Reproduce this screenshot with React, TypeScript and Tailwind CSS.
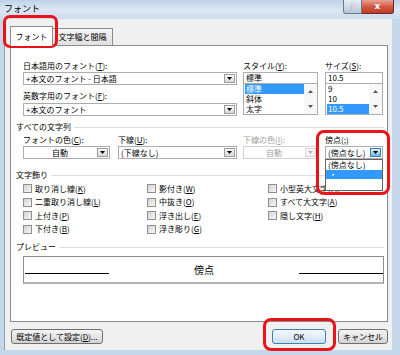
import React from "react";

const jp = "font-['Noto_Sans_CJK_JP',sans-serif]";

function Tri({ up, color = "#000" }: { up?: boolean; color?: string }) {
  return (
    <svg width="5" height="3" viewBox="0 0 5 3">
      <path d={up ? "M0 3h5L2.5 0z" : "M0 0h5L2.5 3z"} fill={color} />
    </svg>
  );
}

function DropBtn({ disabled, active }: { disabled?: boolean; active?: boolean }) {
  const look = active
    ? "border-[#3c7fb1] bg-gradient-to-b from-[#d9effa] to-[#6fb6de]"
    : disabled
    ? "border-[#d5d5d5] bg-[#f4f4f4]"
    : "border-[#9c9c9c] bg-gradient-to-b from-[#f8f8f8] to-[#d9d9d9]";
  return (
    <div className={`m-[1px] flex w-[11px] items-center justify-center border ${look}`}>
      <Tri color={disabled ? "#b4b4b4" : "#000"} />
    </div>
  );
}

function Combo({
  text,
  center,
  disabled,
  active,
  className = "",
}: {
  text: string;
  center?: boolean;
  disabled?: boolean;
  active?: boolean;
  className?: string;
}) {
  return (
    <div
      className={`flex h-[13px] items-stretch border bg-white ${
        disabled ? "border-[#d0d4da]" : "border-[#abadb3]"
      } ${className}`}
    >
      <div
        className={`flex flex-1 items-center whitespace-nowrap text-[8px] leading-none ${
          center ? "justify-center" : "pl-[2px]"
        } ${disabled ? "text-[#a0a0a0]" : "text-black"}`}
      >
        {text}
      </div>
      <DropBtn disabled={disabled} active={active} />
    </div>
  );
}

function ListBox({ items, selected }: { items: string[]; selected: number }) {
  return (
    <div className="flex h-[31px] border border-[#abadb3] border-t-0 bg-white">
      <div className="flex flex-1 flex-col pl-[1px]">
        {items.map((it, i) => (
          <div
            key={it}
            className={`flex h-[10px] items-center pl-[1px] text-[8px] leading-none ${
              i === selected ? "bg-[#3399ff] text-white" : "text-black"
            }`}
          >
            {it}
          </div>
        ))}
      </div>
      <div className="flex w-[13px] flex-col bg-[#f7f7f7]">
        <div className="flex flex-1 items-center justify-center">
          <Tri up color="#555" />
        </div>
        <div className="flex flex-1 items-center justify-center">
          <Tri color="#555" />
        </div>
      </div>
    </div>
  );
}

function Heading({ children }: { children: React.ReactNode }) {
  return (
    <div className="flex h-[12px] items-center">
      <span className="whitespace-nowrap text-[8px] leading-none">{children}</span>
      <div className="ml-[3px] h-px flex-1 bg-[#d5dfe5]" />
    </div>
  );
}

function Check({ children }: { children: React.ReactNode }) {
  return (
    <div className="flex items-center">
      <div className="mr-[3px] h-[9px] w-[9px] border border-[#8f8f8f] bg-gradient-to-br from-[#d4d4d4] to-[#f7f7f7]" />
      <span className="whitespace-nowrap text-[8px] leading-none">{children}</span>
    </div>
  );
}

export default function App() {
  return (
    <div className={`relative flex h-[355px] w-[400px] flex-col overflow-hidden bg-[#c4d7eb] text-black ${jp}`}>
      {/* title bar */}
      <div className="flex h-[19px] justify-between bg-gradient-to-b from-[#bed2e7] via-[#dbe7f3] to-[#cddcec] pl-[4px] pr-[6px]">
        <span className="pt-[2px] text-[9px] leading-[14px] text-black">フォント</span>
        <div className="flex h-[14px]">
          <div className="flex w-[19px] items-center justify-center rounded-bl-[3px] border border-t-0 border-[#6b7a8c] bg-gradient-to-b from-[#e6eef6] to-[#b7c8da] text-[9px] font-bold leading-none text-white [text-shadow:0_0_1px_#334]">
            ?
          </div>
          <div className="flex w-[32px] items-center justify-center rounded-br-[3px] border border-l-0 border-t-0 border-[#6e2a22] bg-gradient-to-b from-[#e8a293] via-[#d25a44] to-[#c13a22] font-['DejaVu_Sans',sans-serif] text-[9px] font-bold leading-none text-white">
            x
          </div>
        </div>
      </div>

      {/* client */}
      <div className="mb-[5px] ml-[4px] mr-[8px] flex flex-1 flex-col border-l border-[#8b9bb0] bg-[#f0f0f0] pl-[5px] pr-[4px]">
        {/* tabs */}
        <div className="flex h-[26px] items-end pt-[7px]">
          <div className="relative z-10 -mb-px flex h-[20px] w-[43px] items-center justify-center border border-b-0 border-[#898c95] bg-white text-[8px] leading-none">
            フォント
          </div>
          <div className="flex h-[17px] w-[60px] items-center justify-center border border-b-0 border-l-0 border-[#898c95] bg-gradient-to-b from-[#f5f5f5] to-[#e0e0e0] text-[8px] leading-none">
            文字幅と間隔
          </div>
        </div>

        {/* panel */}
        <div className="flex h-[277px] flex-col border border-[#898c95] bg-white pl-[5px] pr-[3px] pt-[13px]">
          <div className="flex pl-[7px]">
            <div className="flex w-[214px] flex-col">
              <div className="flex h-[13px] items-center text-[8px] leading-none">
                日本語用のフォント(<u>T</u>):
              </div>
              <Combo text="+本文のフォント - 日本語" />
              <div className="flex h-[18px] items-center pt-[4px] text-[8px] leading-none">
                英数字用のフォント(<u>F</u>):
              </div>
              <Combo text="+本文のフォント" />
            </div>
            <div className="ml-[6px] flex w-[75px] flex-col">
              <div className="flex h-[13px] items-center text-[8px] leading-none">
                スタイル(<u>Y</u>):
              </div>
              <div className="flex h-[12px] items-center border border-[#abadb3] pl-[2px] text-[8px] leading-none">
                標準
              </div>
              <ListBox items={["標準", "斜体", "太字"]} selected={0} />
            </div>
            <div className="ml-[7px] flex w-[58px] flex-col">
              <div className="flex h-[13px] items-center text-[8px] leading-none">
                サイズ(<u>S</u>):
              </div>
              <div className="flex h-[12px] items-center border border-[#abadb3] pl-[2px] text-[8px] leading-none">
                10.5
              </div>
              <ListBox items={["9", "10", "10.5"]} selected={2} />
            </div>
          </div>

          <div className="mt-[5px]">
            <Heading>すべての文字列</Heading>
          </div>
          <div className="flex pl-[7px]">
            <div className="flex w-[95px] flex-col">
              <div className="flex h-[13px] items-center text-[8px] leading-none">
                フォントの色(<u>C</u>):
              </div>
              <Combo text="自動" center className="w-[87px]" />
            </div>
            <div className="flex w-[125px] flex-col">
              <div className="flex h-[13px] items-center text-[8px] leading-none">
                下線(<u>U</u>):
              </div>
              <Combo text="(下線なし)" className="w-[119px]" />
            </div>
            <div className="flex w-[82px] flex-col">
              <div className="flex h-[13px] items-center text-[8px] leading-none text-[#a0a0a0]">
                下線の色(<u>I</u>):
              </div>
              <Combo text="自動" center disabled className="w-[75px]" />
            </div>
            <div className="flex w-[58px] flex-col">
              <div className="flex h-[13px] items-center text-[8px] leading-none">
                傍点(<u>;</u>)
              </div>
              <Combo text="(傍点なし)" active className="w-[58px]" />
            </div>
          </div>

          <div className="mt-[10px]">
            <Heading>文字飾り</Heading>
          </div>
          <div className="mt-[1px] grid grid-cols-[124px_121px_1fr] grid-rows-[13px_14px_13px_14px] pl-[7px]">
            <Check>取り消し線(<u>K</u>)</Check>
            <Check>影付き(<u>W</u>)</Check>
            <Check>小型英大文字(<u>M</u>)</Check>
            <Check>二重取り消し線(<u>L</u>)</Check>
            <Check>中抜き(<u>O</u>)</Check>
            <Check>すべて大文字(<u>A</u>)</Check>
            <Check>上付き(<u>P</u>)</Check>
            <Check>浮き出し(<u>E</u>)</Check>
            <Check>隠し文字(<u>H</u>)</Check>
            <Check>下付き(<u>B</u>)</Check>
            <Check>浮き彫り(<u>G</u>)</Check>
            <div />
          </div>

          <div className="mt-[5px]">
            <Heading>プレビュー</Heading>
          </div>
          <div className="ml-[7px] mt-[3px] flex h-[28px] items-center justify-between border border-b-2 border-[#8d8d8d] border-b-[#b4b4b4] pl-[1px]">
            <div className="mt-[7px] h-px w-[84px] bg-black" />
            <span className="text-[10px] leading-none">傍点</span>
            <div className="mt-[7px] h-px w-[84px] bg-black" />
          </div>
        </div>

        {/* buttons */}
        <div className="mt-[7px] flex h-[15px] pl-[1px]">
          <div className="flex w-[92px] items-center justify-center rounded-[3px] border border-[#707070] bg-gradient-to-b from-[#f3f3f3] via-[#e6e6e6] to-[#d2d2d2] text-[8px] leading-none">
            既定値として設定(<u>D</u>)...
          </div>
          <div className="ml-auto flex w-[54px] items-center justify-center rounded-[3px] border border-[#3c7fb1] bg-gradient-to-b from-[#f2f7fb] via-[#e2eef8] to-[#c9dff0] text-[8px] leading-none">
            OK
          </div>
          <div className="ml-[12px] flex w-[50px] items-center justify-center rounded-[3px] border border-[#707070] bg-gradient-to-b from-[#f3f3f3] via-[#e6e6e6] to-[#d2d2d2] text-[8px] leading-none">
            キャンセル
          </div>
        </div>
      </div>

      {/* open dropdown list of 傍点 */}
      <div className="absolute left-[325px] top-[159px] flex h-[32px] w-[58px] flex-col border border-[#646464] bg-white">
        <div className="flex h-[10px] items-center pl-[2px] text-[8px] leading-none">(傍点なし)</div>
        <div className="flex h-[9px] items-center bg-[#3399ff] pl-[3px] text-[8px] leading-none text-white">・</div>
      </div>

      {/* red highlights */}
      <div className="pointer-events-none absolute left-[3px] top-[15px] h-[33px] w-[55px] rounded-[7px] border-[3px] border-[#e8141a]" />
      <div className="pointer-events-none absolute left-[316px] top-[130px] h-[65px] w-[74px] rounded-[8px] border-[3px] border-[#e8141a]" />
      <div className="pointer-events-none absolute left-[263px] top-[318px] h-[33px] w-[73px] rounded-[8px] border-[3px] border-[#e8141a]" />
    </div>
  );
}
